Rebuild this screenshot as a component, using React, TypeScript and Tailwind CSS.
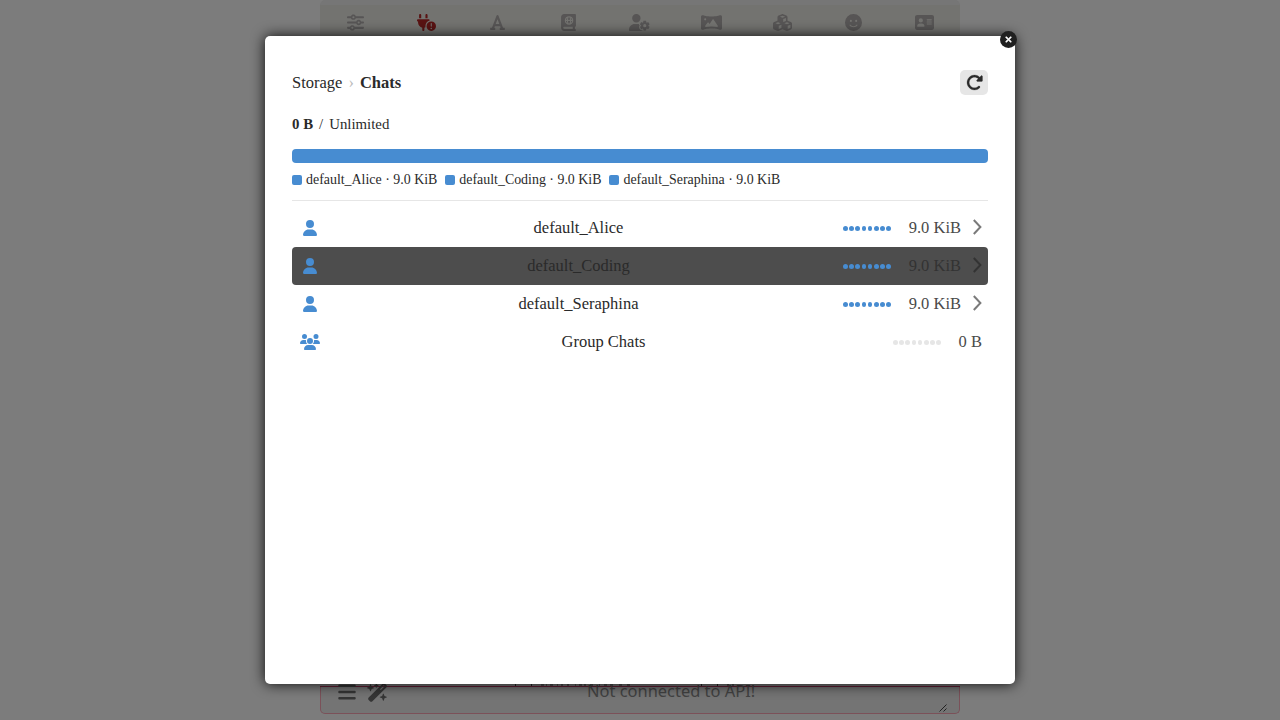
import {
  FaAddressCard, FaBars, FaBookAtlas, FaCubes, FaFaceSmile, FaFont, FaPanorama,
  FaPlugCircleExclamation, FaRotateRight, FaSliders, FaUser, FaUserGear, FaUsers, FaWandMagicSparkles, FaXmark,
} from 'react-icons/fa6';

const nav = [
  { Icon: FaSliders, size: 17 },
  { Icon: FaPlugCircleExclamation, size: 19 },
  { Icon: FaFont, size: 17 },
  { Icon: FaBookAtlas, size: 17 },
  { Icon: FaUserGear, size: 21 },
  { Icon: FaPanorama, size: 21 },
  { Icon: FaCubes, size: 19 },
  { Icon: FaFaceSmile, size: 17 },
  { Icon: FaAddressCard, size: 19 },
];

const chats = [
  { name: 'default_Alice', size: '9.0 KiB' },
  { name: 'default_Coding', size: '9.0 KiB', active: true },
  { name: 'default_Seraphina', size: '9.0 KiB' },
  { name: 'Group Chats', size: '0 B', group: true },
];

function Dots({ empty }: { empty?: boolean }) {
  return (
    <div className="mt-px flex w-12 shrink-0 justify-between">
      {Array.from({ length: 8 }, (_, i) => (
        <span key={i} className={`h-[5px] w-[4.6px] rounded-full ${empty ? 'bg-[#e6e6e6]' : 'bg-[#478cd1]'}`} />
      ))}
    </div>
  );
}

export default function App() {
  return (
    <div className="relative flex h-[720px] w-[1280px] flex-col items-center justify-between overflow-hidden bg-[#7c7c7c] font-['Liberation_Serif',serif] text-[#2a2a2a]">
      <header className="flex h-11 w-[640px] rounded-t-[5px] border-t-[5px] border-[#767676] bg-[#737370] text-[#575555]">
        {nav.map(({ Icon, size }, i) => (
          <div key={i} className={`flex h-[35px] flex-1 items-center justify-center ${i === 1 ? 'text-[#591313]' : ''}`}>
            <Icon size={size} />
          </div>
        ))}
      </header>

      <footer className="mb-[6px] flex h-[34px] w-[640px] flex-col">
        <div className="flex h-[7px] items-end justify-center border-b border-[#651f35] pl-10">
          <svg width="290" height="2" viewBox="0 0 290 2" stroke="#262626" strokeWidth="1">
            <path d="M.5 0v2M16.5 0v2M26 1h3m2 0h1m3 0h3m4 0h1m3 0h2m4 0h2m6 0h1m3 0h3m2 0h2m4 0h3m6 0h1m4 0h3m3 0h3m6 0h3m5 0h3M186.5 0v2M202.5 0v2M212 1h2m3 0h2" />
          </svg>
        </div>
        <div className="relative flex h-[27px] rounded-b-[5px] border border-t-0 border-[#7b5159] bg-[#747474] text-[#353535]">
          <div className="-mt-[3px] ml-[16px] flex h-4 items-center gap-[10px]">
            <FaBars size={20} />
            <FaWandMagicSparkles size={21} />
          </div>
          <span className="-mt-[3px] ml-[199px] font-['Noto_Sans',sans-serif] text-[16.45px] leading-[13px] text-[#424242]">Not connected to API!</span>
          <svg className="absolute right-3 bottom-[1px]" width="8" height="8" viewBox="0 0 8 8" stroke="#222" strokeWidth="1">
            <path d="M.5 7.5l7-7M4.5 7.5l3-3" />
          </svg>
        </div>
      </footer>

      <main className="absolute top-9 left-[265px] flex h-[648px] w-[750px] flex-col rounded-[5px] bg-white px-[27px] pt-[34px] shadow-[0_0_14px_rgba(0,0,0,0.9)]">
        <button className="absolute -top-[5px] -right-[2px] flex size-[17px] items-center justify-center rounded-full bg-[#202020] text-white">
          <FaXmark size={9} stroke="currentColor" strokeWidth={35} />
        </button>

        <div className="flex h-[25px] items-center justify-between">
          <div className="flex items-center text-[16.5px] leading-[25px]">
            <span>Storage</span>
            <span className="mx-[6px] text-[#bbb]">›</span>
            <b>Chats</b>
          </div>
          <button className="flex h-[25px] w-7 items-center justify-center rounded-[5px] bg-[#e6e6e6] pb-px">
            <FaRotateRight size={17} stroke="currentColor" strokeWidth={8} />
          </button>
        </div>

        <div className="mt-[19px] flex h-5 items-center gap-[6px] text-[14.85px]">
          <b>0 B</b><span>/</span><span>Unlimited</span>
        </div>
        <div className="mt-[15px] h-[14px] rounded-[4px] bg-[#478cd1]" />
        <div className="mt-[7px] flex h-5 items-center gap-2 text-[13.92px]">
          {chats.slice(0, 3).map((c) => (
            <div key={c.name} className="flex items-center gap-1">
              <span className="size-[10px] rounded-[2px] bg-[#478cd1]" />
              <span className="leading-5">{c.name} · {c.size}</span>
            </div>
          ))}
        </div>
        <div className="mt-[10px] h-px bg-[#e6e6e6]" />

        <div className="mt-2 flex flex-col">
          {chats.map((c) => (
            <div key={c.name} className={`flex h-[38px] items-center rounded-[4px] pr-[6px] pl-2 text-[16.5px] ${c.active ? 'bg-[#4d4d4d]' : ''}`}>
              <div className="flex w-5 justify-center text-[#478cd1]">
                {c.group ? <FaUsers className="shrink-0" size={20} /> : <FaUser size={16} />}
              </div>
              <span className="flex-1 pr-[6px] text-center">{c.name}</span>
              <Dots empty={c.group} />
              <span className={`text-right ${c.group ? 'w-[41px]' : 'w-[70px]'} ${c.active ? 'text-[#333]' : 'text-[#4a4a4a]'}`}>{c.size}</span>
              {!c.group && (
                <svg className={`-mt-[2px] ml-[11px] ${c.active ? 'text-[#333]' : 'text-[#7a7a7a]'}`} width="10" height="16" viewBox="0 0 10 16" fill="none" stroke="currentColor" strokeWidth="2">
                  <path d="M1.8 1l6.6 7-6.6 7" />
                </svg>
              )}
            </div>
          ))}
        </div>
      </main>
    </div>
  );
}
